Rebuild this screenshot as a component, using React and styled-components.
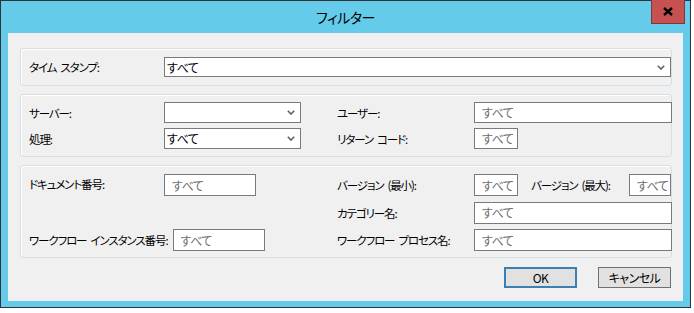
import React from "react";
import styled, { createGlobalStyle } from "styled-components";

const Global = createGlobalStyle`
  html, body { margin: 0; padding: 0; background: #ffffff; }
  body {
    font-family: "Noto Sans CJK JP", "Noto Sans", sans-serif;
    font-size: 12px;
    font-feature-settings: "palt";
    color: #000;
  }
  * { box-sizing: border-box; }
`;

const Window = styled.div`
  width: 691px;
  height: 308px;
  border: 1px solid #333333;
  background: #64cbea;
  display: flex;
  flex-direction: column;
`;

const TitleBar = styled.div`
  position: relative;
  height: 32px;
  flex: none;
  display: flex;
  align-items: center;
  justify-content: center;
`;

const Title = styled.span`
  font-size: 14px;
  letter-spacing: -0.5px;
  margin-top: -1px;
  color: #000;
`;

const CloseButton = styled.div`
  position: absolute;
  top: -1px;
  right: 5px;
  width: 34px;
  height: 24px;
  background: #c75050;
  border: 1px solid #7a3a3a;
  border-top: none;
  display: flex;
  align-items: center;
  justify-content: center;
`;

const Client = styled.div`
  flex: 1;
  margin: 0 7px 6px;
  background: #f0f0f0;
  padding: 15px 11px 0 12px;
  display: flex;
  flex-direction: column;
`;

const Group = styled.div`
  border: 1px solid #d5dfe5;
  border-radius: 3px;
  box-shadow: inset 1px 1px 0 #ffffff;
  padding: ${(p) => p.$pad};
  margin-bottom: ${(p) => p.$mb}px;
  display: grid;
  grid-template-columns: 135px 137px 36px 137px 1fr;
  grid-template-rows: ${(p) => p.$rows};
  row-gap: ${(p) => p.$rowGap || 0}px;
  align-items: center;
`;

const Label = styled.span`
  white-space: pre;
  font-size: 11.5px;
  letter-spacing: -1.1px;
  word-spacing: 2.5px;
  grid-column: ${(p) => p.$col || "auto"};
  grid-row: ${(p) => p.$row || "auto"};
  margin-top: ${(p) => p.$dy || 0}px;
`;

const InlineLabel = styled(Label)`
  margin-left: 13px;
  width: 98px;
  flex: none;
`;

const Cell = styled.div`
  grid-column: ${(p) => p.$col};
  grid-row: ${(p) => p.$row || "auto"};
  display: flex;
  align-items: center;
  gap: ${(p) => p.$gap || 0}px;
  height: 100%;
`;

const Combo = styled.div`
  grid-column: ${(p) => p.$col};
  height: ${(p) => p.$h || 21}px;
  background: #ffffff;
  border: 1px solid #7a7a7a;
  display: flex;
  align-items: center;
  justify-content: space-between;
  padding: 0 5px 0 2px;
  letter-spacing: -0.5px;
`;

const Field = styled.input`
  grid-column: ${(p) => p.$col || "auto"};
  width: ${(p) => (p.$w ? p.$w + "px" : "calc(100% + 1px)")};
  flex: ${(p) => (p.$w ? "none" : "1")};
  min-width: 0;
  height: ${(p) => p.$h || 22}px;
  background: #ffffff;
  border: 1px solid #7a7a7a;
  padding: 0 0 0 7px;
  margin: 0;
  font: inherit;
  letter-spacing: -0.5px;
  outline: none;
  &::placeholder { color: #6d6d6d; opacity: 1; }
`;

const ButtonRow = styled.div`
  display: flex;
  justify-content: flex-end;
  gap: 21px;
  padding-right: 1px;
`;

const Button = styled.button`
  width: 73px;
  height: 21px;
  margin: 0;
  padding: 0;
  background: #e1e1e1;
  border: 1px solid ${(p) => (p.$default ? "#3c7fb1" : "#707070")};
  box-shadow: ${(p) => (p.$default ? "inset 0 0 0 1px #3c7fb1" : "none")};
  font: inherit;
  letter-spacing: -0.5px;
  color: #000;
`;

const Chevron = () => (
  <svg width="8" height="5" viewBox="0 0 8 5">
    <path d="M0.8 0.8 L4 4 L7.2 0.8" fill="none" stroke="#606060" strokeWidth="1.6" />
  </svg>
);

const CloseGlyph = () => (
  <svg width="10" height="9" viewBox="0 0 10 9">
    <path d="M1 1 L9 8 M9 1 L1 8" stroke="#000" strokeWidth="2.4" />
  </svg>
);

export default function App() {
  return (
    <>
      <Global />
      <Window>
        <TitleBar>
          <Title>フィルター</Title>
          <CloseButton>
            <CloseGlyph />
          </CloseButton>
        </TitleBar>
        <Client>
          <Group $pad="8px 0 8px 8px" $rows="20px" $mb={8}>
            <Label>タイム スタンプ:</Label>
            <Combo $col="2 / -1" $h={20}>
              <span>すべて</span>
              <Chevron />
            </Combo>
          </Group>

          <Group $pad="7px 0 7px 8px" $rows="21px 21px" $rowGap={5} $mb={8}>
            <Label $col="1" $row="1">サーバー:</Label>
            <Combo $col="2" $row="1">
              <span />
              <Chevron />
            </Combo>
            <Label $col="4" $row="1">ユーザー:</Label>
            <Field $col="5" $h={21} placeholder="すべて" />
            <Label $col="1" $row="2">処理:</Label>
            <Combo $col="2">
              <span>すべて</span>
              <Chevron />
            </Combo>
            <Label $col="4" $row="2">リターン コード:</Label>
            <Cell $col="5" $row="2">
              <Field $w={44} $h={21} placeholder="すべて" />
            </Cell>
          </Group>

          <Group $pad="8px 0 6px 8px" $rows="22px 22px 22px" $rowGap={5.5} $mb={9}>
            <Label $col="1" $row="1" $dy={-3}>ドキュメント番号:</Label>
            <Cell $col="2" $row="1">
              <Field $w={92} placeholder="すべて" />
            </Cell>
            <Label $col="4" $row="1">バージョン (最小):</Label>
            <Cell $col="5" $row="1">
              <Field $w={44} placeholder="すべて" />
              <InlineLabel>バージョン (最大):</InlineLabel>
              <Field placeholder="すべて" />
            </Cell>
            <Label $col="4" $row="2">カテゴリー名:</Label>
            <Field $col="5" placeholder="すべて" />
            <Cell $col="1 / 3" $row="3" $gap={5}>
              <Label>ワークフロー インスタンス番号:</Label>
              <Field $w={92} placeholder="すべて" />
            </Cell>
            <Label $col="4" $row="3">ワークフロー プロセス名:</Label>
            <Field $col="5" placeholder="すべて" />
          </Group>

          <ButtonRow>
            <Button $default>OK</Button>
            <Button>キャンセル</Button>
          </ButtonRow>
        </Client>
      </Window>
    </>
  );
}
